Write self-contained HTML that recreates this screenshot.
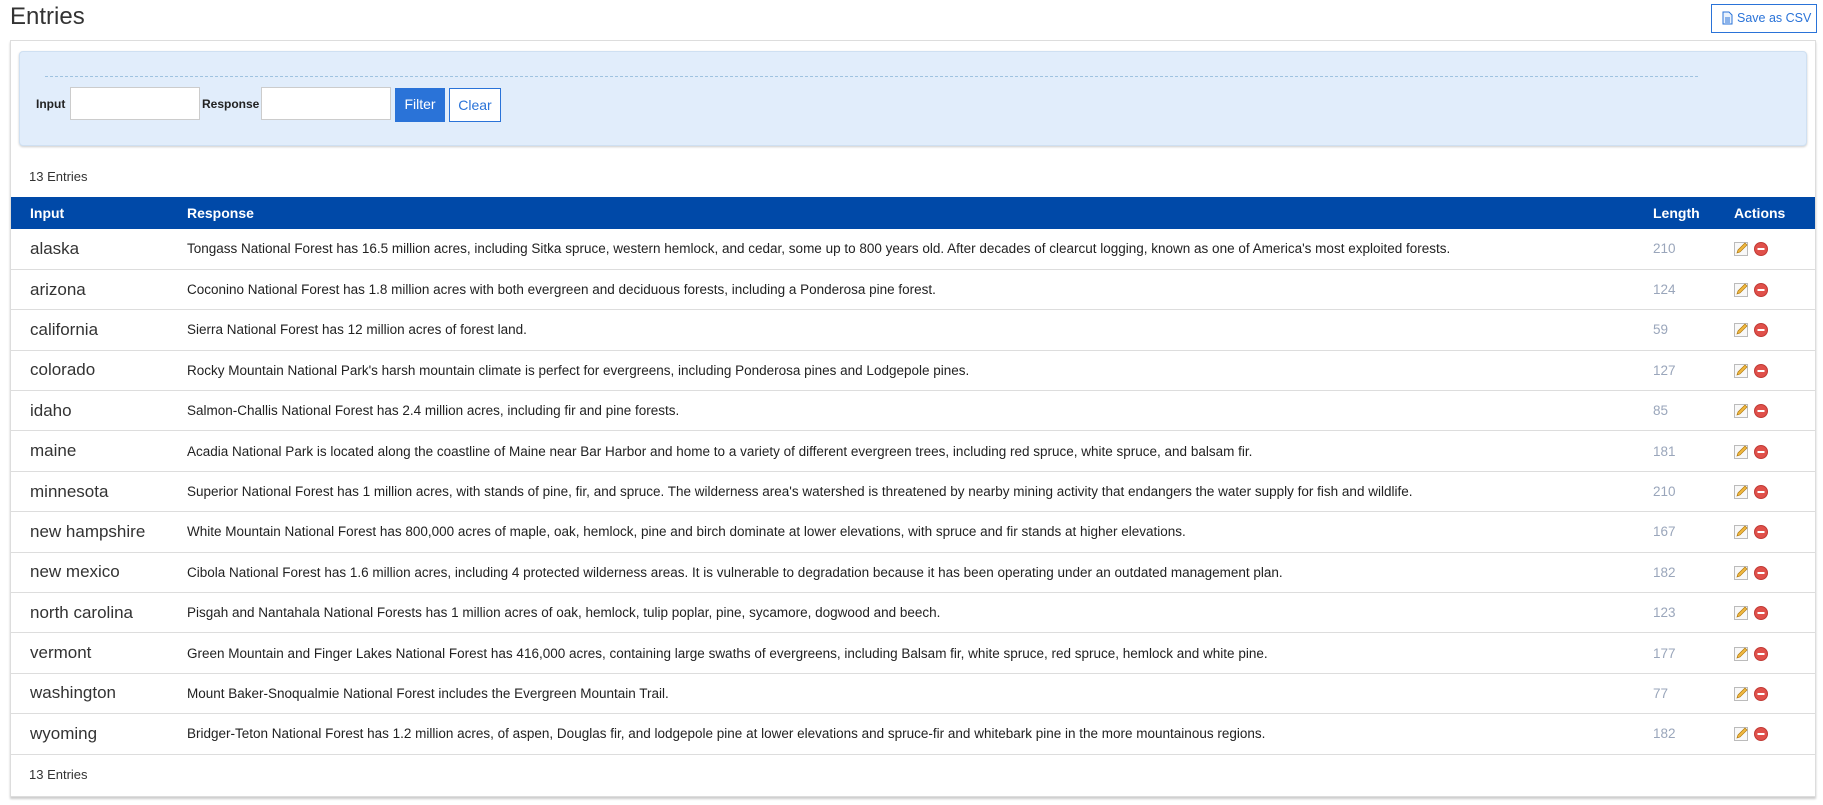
<!DOCTYPE html>
<html><head><meta charset="utf-8"><style>
*{box-sizing:border-box}
body{margin:0;width:1823px;height:805px;background:#fff;font-family:"Liberation Sans",sans-serif;color:#222;overflow:hidden;position:relative}
h1{position:absolute;left:10px;top:3px;margin:0;font-weight:normal;font-size:24px;color:#333}
.csv{position:absolute;left:1711px;top:4px;width:106px;height:29px;border:1px solid #2a73d8;color:#2a73d8;font-size:12.5px;line-height:27px;padding-left:25px;white-space:nowrap}
.csv svg{position:absolute;left:10px;top:6px}
.panel{position:absolute;left:10px;top:40px;width:1806px;height:757px;border:1px solid #ddd;box-shadow:0 2px 2px #ccc}
.filter{position:absolute;left:8px;top:10px;width:1788px;height:95px;background:#e1edfb;border:1px solid #cfe0f2;border-radius:4px;box-shadow:0 1px 2px #ccc}
.dash{position:absolute;left:25px;top:24px;width:1653px;border-top:1px dashed #9fc3e0}
.lbl{position:absolute;top:45px;font-weight:bold;font-size:12px;color:#222}
.inp{position:absolute;top:35px;width:130px;height:33px;background:#fff;border:1px solid #ccc}
.btn{position:absolute;top:36px;height:34px;font-size:14px;line-height:32px;text-align:center}
.cnt{position:absolute;left:18px;font-size:13px;color:#333}
table{position:absolute;left:0;top:156px;width:1804px;border-collapse:collapse;table-layout:fixed}
th{background:#0049a8;color:#fff;text-align:left;font-size:14px;height:32px;padding:0}
td{height:40.4px;border-bottom:1px solid #ddd;padding:0;font-size:13.5px;white-space:nowrap;color:#222}
td.i{font-size:17px;padding-left:19px;color:#333}
.len{color:#9aa6bb}
td.a{padding-left:1px;padding-top:4px}
</style></head><body>
<h1>Entries</h1>
<div class="csv"><svg width="11" height="14" viewBox="0 0 11 14"><path d="M1 1h6l3 3v9H1z" fill="#eaf2fc" stroke="#2a73d8"/><path d="M3 7h5M3 9h5M3 11h5" stroke="#2a73d8"/></svg>Save as CSV</div>
<div class="panel">
<div class="filter">
<div class="dash"></div>
<div class="lbl" style="left:16px">Input</div>
<div class="inp" style="left:50px"></div>
<div class="lbl" style="left:182px">Response</div>
<div class="inp" style="left:241px"></div>
<div class="btn" style="left:375px;width:50px;background:#2a73d8;color:#fff">Filter</div>
<div class="btn" style="left:429px;width:52px;border:1px solid #2a73d8;background:#fff;color:#2a73d8">Clear</div>
</div>
<div class="cnt" style="top:128px">13 Entries</div>
<table>
<colgroup><col style="width:176px"><col><col style="width:80px"><col style="width:82px"></colgroup>
<tr><th style="padding-left:19px">Input</th><th>Response</th><th>Length</th><th style="padding-left:1px">Actions</th></tr>
<tr><td class="i">alaska</td><td>Tongass National Forest has 16.5 million acres, including Sitka spruce, western hemlock, and cedar, some up to 800 years old. After decades of clearcut logging, known as one of America's most exploited forests.</td><td class="len">210</td><td class="a"><svg width="40" height="16" viewBox="0 0 40 16"><rect x="0.5" y="1.5" width="13" height="13" fill="#f8f8f8" stroke="#bbb"/><path d="M3 12l1-3 7-7 2 2-7 7z" fill="#f0b840" stroke="#b07a10" stroke-width=".7"/><circle cx="27" cy="8" r="6.5" fill="#e0504a" stroke="#c03a35"/><rect x="23.5" y="7" width="7" height="2" fill="#fff"/></svg></td></tr>
<tr><td class="i">arizona</td><td>Coconino National Forest has 1.8 million acres with both evergreen and deciduous forests, including a Ponderosa pine forest.</td><td class="len">124</td><td class="a"><svg width="40" height="16" viewBox="0 0 40 16"><rect x="0.5" y="1.5" width="13" height="13" fill="#f8f8f8" stroke="#bbb"/><path d="M3 12l1-3 7-7 2 2-7 7z" fill="#f0b840" stroke="#b07a10" stroke-width=".7"/><circle cx="27" cy="8" r="6.5" fill="#e0504a" stroke="#c03a35"/><rect x="23.5" y="7" width="7" height="2" fill="#fff"/></svg></td></tr>
<tr><td class="i">california</td><td>Sierra National Forest has 12 million acres of forest land.</td><td class="len">59</td><td class="a"><svg width="40" height="16" viewBox="0 0 40 16"><rect x="0.5" y="1.5" width="13" height="13" fill="#f8f8f8" stroke="#bbb"/><path d="M3 12l1-3 7-7 2 2-7 7z" fill="#f0b840" stroke="#b07a10" stroke-width=".7"/><circle cx="27" cy="8" r="6.5" fill="#e0504a" stroke="#c03a35"/><rect x="23.5" y="7" width="7" height="2" fill="#fff"/></svg></td></tr>
<tr><td class="i">colorado</td><td>Rocky Mountain National Park's harsh mountain climate is perfect for evergreens, including Ponderosa pines and Lodgepole pines.</td><td class="len">127</td><td class="a"><svg width="40" height="16" viewBox="0 0 40 16"><rect x="0.5" y="1.5" width="13" height="13" fill="#f8f8f8" stroke="#bbb"/><path d="M3 12l1-3 7-7 2 2-7 7z" fill="#f0b840" stroke="#b07a10" stroke-width=".7"/><circle cx="27" cy="8" r="6.5" fill="#e0504a" stroke="#c03a35"/><rect x="23.5" y="7" width="7" height="2" fill="#fff"/></svg></td></tr>
<tr><td class="i">idaho</td><td>Salmon-Challis National Forest has 2.4 million acres, including fir and pine forests.</td><td class="len">85</td><td class="a"><svg width="40" height="16" viewBox="0 0 40 16"><rect x="0.5" y="1.5" width="13" height="13" fill="#f8f8f8" stroke="#bbb"/><path d="M3 12l1-3 7-7 2 2-7 7z" fill="#f0b840" stroke="#b07a10" stroke-width=".7"/><circle cx="27" cy="8" r="6.5" fill="#e0504a" stroke="#c03a35"/><rect x="23.5" y="7" width="7" height="2" fill="#fff"/></svg></td></tr>
<tr><td class="i">maine</td><td>Acadia National Park is located along the coastline of Maine near Bar Harbor and home to a variety of different evergreen trees, including red spruce, white spruce, and balsam fir.</td><td class="len">181</td><td class="a"><svg width="40" height="16" viewBox="0 0 40 16"><rect x="0.5" y="1.5" width="13" height="13" fill="#f8f8f8" stroke="#bbb"/><path d="M3 12l1-3 7-7 2 2-7 7z" fill="#f0b840" stroke="#b07a10" stroke-width=".7"/><circle cx="27" cy="8" r="6.5" fill="#e0504a" stroke="#c03a35"/><rect x="23.5" y="7" width="7" height="2" fill="#fff"/></svg></td></tr>
<tr><td class="i">minnesota</td><td>Superior National Forest has 1 million acres, with stands of pine, fir, and spruce. The wilderness area's watershed is threatened by nearby mining activity that endangers the water supply for fish and wildlife.</td><td class="len">210</td><td class="a"><svg width="40" height="16" viewBox="0 0 40 16"><rect x="0.5" y="1.5" width="13" height="13" fill="#f8f8f8" stroke="#bbb"/><path d="M3 12l1-3 7-7 2 2-7 7z" fill="#f0b840" stroke="#b07a10" stroke-width=".7"/><circle cx="27" cy="8" r="6.5" fill="#e0504a" stroke="#c03a35"/><rect x="23.5" y="7" width="7" height="2" fill="#fff"/></svg></td></tr>
<tr><td class="i">new hampshire</td><td>White Mountain National Forest has 800,000 acres of maple, oak, hemlock, pine and birch dominate at lower elevations, with spruce and fir stands at higher elevations.</td><td class="len">167</td><td class="a"><svg width="40" height="16" viewBox="0 0 40 16"><rect x="0.5" y="1.5" width="13" height="13" fill="#f8f8f8" stroke="#bbb"/><path d="M3 12l1-3 7-7 2 2-7 7z" fill="#f0b840" stroke="#b07a10" stroke-width=".7"/><circle cx="27" cy="8" r="6.5" fill="#e0504a" stroke="#c03a35"/><rect x="23.5" y="7" width="7" height="2" fill="#fff"/></svg></td></tr>
<tr><td class="i">new mexico</td><td>Cibola National Forest has 1.6 million acres, including 4 protected wilderness areas. It is vulnerable to degradation because it has been operating under an outdated management plan.</td><td class="len">182</td><td class="a"><svg width="40" height="16" viewBox="0 0 40 16"><rect x="0.5" y="1.5" width="13" height="13" fill="#f8f8f8" stroke="#bbb"/><path d="M3 12l1-3 7-7 2 2-7 7z" fill="#f0b840" stroke="#b07a10" stroke-width=".7"/><circle cx="27" cy="8" r="6.5" fill="#e0504a" stroke="#c03a35"/><rect x="23.5" y="7" width="7" height="2" fill="#fff"/></svg></td></tr>
<tr><td class="i">north carolina</td><td>Pisgah and Nantahala National Forests has 1 million acres of oak, hemlock, tulip poplar, pine, sycamore, dogwood and beech.</td><td class="len">123</td><td class="a"><svg width="40" height="16" viewBox="0 0 40 16"><rect x="0.5" y="1.5" width="13" height="13" fill="#f8f8f8" stroke="#bbb"/><path d="M3 12l1-3 7-7 2 2-7 7z" fill="#f0b840" stroke="#b07a10" stroke-width=".7"/><circle cx="27" cy="8" r="6.5" fill="#e0504a" stroke="#c03a35"/><rect x="23.5" y="7" width="7" height="2" fill="#fff"/></svg></td></tr>
<tr><td class="i">vermont</td><td>Green Mountain and Finger Lakes National Forest has 416,000 acres, containing large swaths of evergreens, including Balsam fir, white spruce, red spruce, hemlock and white pine.</td><td class="len">177</td><td class="a"><svg width="40" height="16" viewBox="0 0 40 16"><rect x="0.5" y="1.5" width="13" height="13" fill="#f8f8f8" stroke="#bbb"/><path d="M3 12l1-3 7-7 2 2-7 7z" fill="#f0b840" stroke="#b07a10" stroke-width=".7"/><circle cx="27" cy="8" r="6.5" fill="#e0504a" stroke="#c03a35"/><rect x="23.5" y="7" width="7" height="2" fill="#fff"/></svg></td></tr>
<tr><td class="i">washington</td><td>Mount Baker-Snoqualmie National Forest includes the Evergreen Mountain Trail.</td><td class="len">77</td><td class="a"><svg width="40" height="16" viewBox="0 0 40 16"><rect x="0.5" y="1.5" width="13" height="13" fill="#f8f8f8" stroke="#bbb"/><path d="M3 12l1-3 7-7 2 2-7 7z" fill="#f0b840" stroke="#b07a10" stroke-width=".7"/><circle cx="27" cy="8" r="6.5" fill="#e0504a" stroke="#c03a35"/><rect x="23.5" y="7" width="7" height="2" fill="#fff"/></svg></td></tr>
<tr><td class="i">wyoming</td><td>Bridger-Teton National Forest has 1.2 million acres, of aspen, Douglas fir, and lodgepole pine at lower elevations and spruce-fir and whitebark pine in the more mountainous regions.</td><td class="len">182</td><td class="a"><svg width="40" height="16" viewBox="0 0 40 16"><rect x="0.5" y="1.5" width="13" height="13" fill="#f8f8f8" stroke="#bbb"/><path d="M3 12l1-3 7-7 2 2-7 7z" fill="#f0b840" stroke="#b07a10" stroke-width=".7"/><circle cx="27" cy="8" r="6.5" fill="#e0504a" stroke="#c03a35"/><rect x="23.5" y="7" width="7" height="2" fill="#fff"/></svg></td></tr>
</table>
<div class="cnt" style="top:726px">13 Entries</div>
</div>
</body></html>
